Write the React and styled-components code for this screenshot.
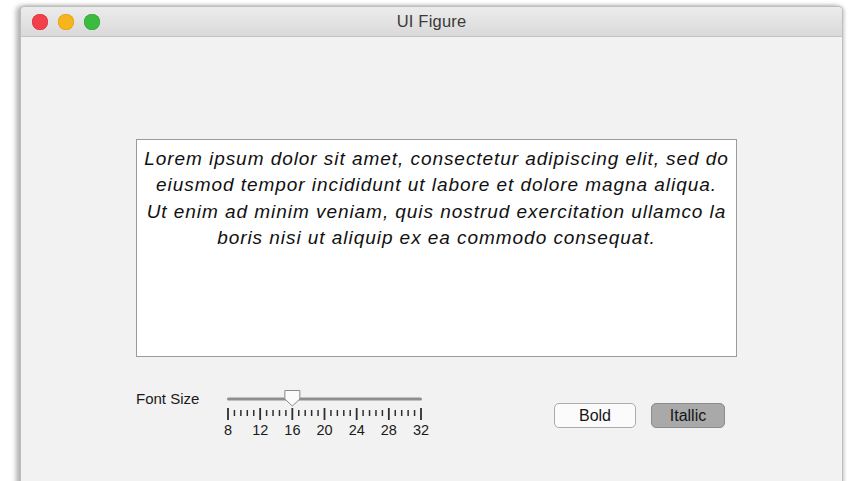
import React from "react";
import styled, { createGlobalStyle } from "styled-components";

const GlobalStyle = createGlobalStyle`
  html, body {
    margin: 0;
    padding: 0;
    background: #ffffff;
    font-family: "Liberation Sans", Arial, Helvetica, sans-serif;
  }
`;

const LINES = [
  "Lorem ipsum dolor sit amet, consectetur adipiscing elit, sed do",
  "eiusmod tempor incididunt ut labore et dolore magna aliqua.",
  "Ut enim ad minim veniam, quis nostrud exercitation ullamco la",
  "boris nisi ut aliquip ex ea commodo consequat.",
];

const TICK_LABELS = [8, 12, 16, 20, 24, 28, 32];

function App() {
  return (
    <Page>
      <GlobalStyle />
      <Window>
        <TitleBar>
          <Lights>
            <Light color="#f2414a" edge="#d6323b" />
            <Light color="#f7b51d" edge="#dc9c12" />
            <Light color="#3cbb3f" edge="#2da231" />
          </Lights>
          <Title>UI Figure</Title>
          <span />
        </TitleBar>
        <Body>
          <TextBox>
            {LINES.map((line, idx) => (
              <Line key={idx}>{line}</Line>
            ))}
          </TextBox>
          <Controls>
            <FieldLabel>Font Size</FieldLabel>
            <Slider value={16} />
            <Buttons>
              <Toggle>Bold</Toggle>
              <Toggle pressed>Itallic</Toggle>
            </Buttons>
          </Controls>
        </Body>
      </Window>
    </Page>
  );
}

function Slider({ value }) {
  const width = 193;
  const min = 8;
  const max = 32;
  const pos = ((value - min) / (max - min)) * width + 3;
  const ticks = [];
  for (let i = 0; i <= 30; i++) {
    const x = 3 + (i * width) / 30;
    const major = i % 5 === 0;
    ticks.push(
      <line
        key={i}
        x1={x}
        x2={x}
        y1={major ? 18 : 20}
        y2={major ? 30 : 26}
        stroke="#2e2e2e"
        strokeWidth={major ? 1.8 : 1.5}
      />
    );
  }
  return (
    <SliderWrap>
      <svg width={width + 6} height={32} viewBox={`0 0 ${width + 6} 32`}>
        <rect x="2" y="7.5" width={width + 2} height="3" rx="1.5" fill="#8e8e8e" />
        {ticks}
        <path
          d={`M${pos - 7.5} 0.5 H${pos + 7.5} V9 L${pos} 16 L${pos - 7.5} 9 Z`}
          fill="#fbfbfb"
          stroke="#8a8a8a"
          strokeWidth="1"
        />
      </svg>
      <TickLabels>
        {TICK_LABELS.map((t) => (
          <TickLabel key={t}>{t}</TickLabel>
        ))}
      </TickLabels>
    </SliderWrap>
  );
}

export default App;

const Page = styled.div`
  width: 848px;
  height: 481px;
  overflow: hidden;
  padding: 6px 5px 0 20px;
  box-sizing: border-box;
`;

const Window = styled.div`
  width: 823px;
  height: 485px;
  box-sizing: border-box;
  border: 1px solid #bdbdbd;
  border-bottom: none;
  border-radius: 5px 5px 0 0;
  background: #f2f2f2;
  box-shadow: -4px 0 5px rgba(0, 0, 0, 0.28), 2px 0 3px rgba(0, 0, 0, 0.12),
    0 -1px 4px rgba(0, 0, 0, 0.08);
  overflow: hidden;
`;

const TitleBar = styled.div`
  height: 29px;
  display: grid;
  grid-template-columns: 1fr auto 1fr;
  align-items: center;
  background: linear-gradient(#ececec, #d9d9d9);
  border-bottom: 1px solid #c4c4c4;
`;

const Lights = styled.div`
  display: flex;
  gap: 10px;
  padding-left: 11px;
`;

const Light = styled.span`
  width: 16px;
  height: 16px;
  border-radius: 50%;
  background: ${(p) => p.color};
  box-shadow: inset 0 0 0 0.5px ${(p) => p.edge};
`;

const Title = styled.div`
  font-size: 16.5px;
  color: #3a3a3a;
  letter-spacing: 0.2px;
`;

const Body = styled.div`
  padding: 102px 0 0 115px;
`;

const TextBox = styled.div`
  width: 601px;
  height: 218px;
  box-sizing: border-box;
  border: 1px solid #9b9b9b;
  background: #ffffff;
  padding-top: 6px;
  text-align: center;
  font-style: italic;
  font-size: 19px;
  letter-spacing: 0.95px;
  line-height: 26.3px;
  color: #111111;
`;

const Line = styled.div`
  white-space: nowrap;
`;

const Controls = styled.div`
  display: flex;
  align-items: flex-start;
  margin-top: 33px;
`;

const FieldLabel = styled.div`
  width: 89px;
  font-size: 15px;
  line-height: 18px;
  color: #1a1a1a;
`;

const SliderWrap = styled.div`
  width: 199px;
  display: flex;
  flex-direction: column;
`;

const TickLabels = styled.div`
  display: grid;
  grid-template-columns: repeat(7, 32.17px);
  margin-left: -13px;
`;

const TickLabel = styled.span`
  text-align: center;
  font-size: 14.5px;
  line-height: 16px;
  color: #1a1a1a;
`;

const Buttons = styled.div`
  display: flex;
  gap: 15px;
  margin-top: 13px;
  margin-left: 130px;
`;

const Toggle = styled.button`
  height: 25px;
  width: ${(p) => (p.pressed ? "74px" : "82px")};
  box-sizing: border-box;
  border-radius: 5px;
  border: 1px solid ${(p) => (p.pressed ? "#8c8c8c" : "#ababab")};
  background: ${(p) => (p.pressed ? "#a9a9a9" : "#fbfbfb")};
  font-family: "Liberation Sans", Arial, sans-serif;
  font-size: 16px;
  color: #161616;
  padding: 0;
`;
